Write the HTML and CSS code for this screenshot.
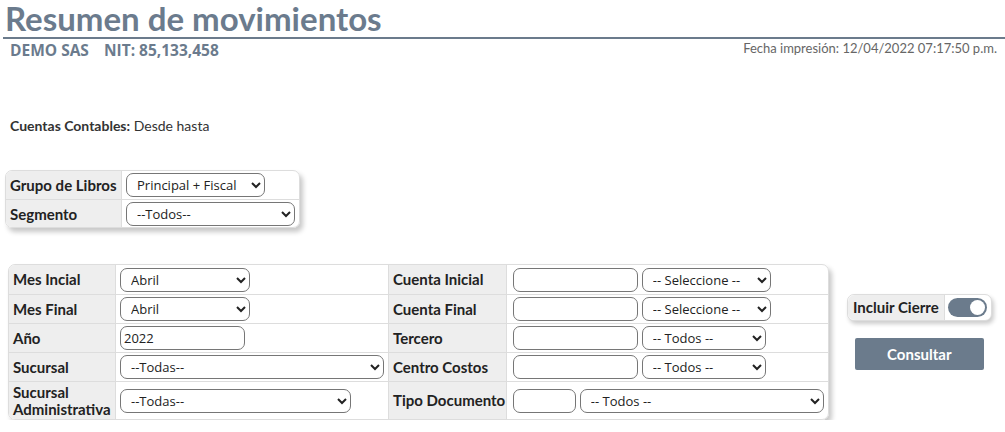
FILE: index.html
```html
<!DOCTYPE html>
<html lang="es">
<head>
  <meta charset="UTF-8">
  <meta name="viewport" content="width=device-width, initial-scale=1.0">
  <title>Resumen de movimientos</title>
  <link rel="stylesheet" href="styles.css">
</head>
<body>

  <!-- Encabezado -->
  <div class="encabezado">
    <h1>Resumen de movimientos</h1>
  </div>
  <div class="empresa">
    <span class="empresa-nombre">DEMO SAS <span class="nit">NIT: 85,133,458</span></span>
    <span class="fecha">Fecha impresión: 12/04/2022 07:17:50 p.m.</span>
  </div>

  <p class="cuentas"><b>Cuentas Contables:</b> Desde hasta</p>

  <!-- Libros -->
  <table class="tabla tabla-libros">
    <tr>
      <th>Grupo de Libros</th>
      <td>
        <select class="sel-libros">
          <option>Principal + Fiscal</option>
        </select>
      </td>
    </tr>
    <tr>
      <th>Segmento</th>
      <td>
        <select class="sel-segmento">
          <option>--Todos--</option>
        </select>
      </td>
    </tr>
  </table>

  <!-- Filtros -->
  <div class="filtros">
    <table class="tabla tabla-filtros">
      <tr>
        <th class="col1">Mes Incial</th>
        <td class="col2"><select class="sel-mes"><option>Abril</option></select></td>
        <th class="col3">Cuenta Inicial</th>
        <td class="col4">
          <input type="text" class="inp-cuenta">
          <select class="sel-cuenta"><option>-- Seleccione --</option></select>
        </td>
      </tr>
      <tr>
        <th>Mes Final</th>
        <td><select class="sel-mes"><option>Abril</option></select></td>
        <th>Cuenta Final</th>
        <td>
          <input type="text" class="inp-cuenta">
          <select class="sel-cuenta"><option>-- Seleccione --</option></select>
        </td>
      </tr>
      <tr>
        <th>Año</th>
        <td><input type="text" class="inp-anio" value="2022"></td>
        <th>Tercero</th>
        <td>
          <input type="text" class="inp-cuenta">
          <select class="sel-todos"><option>-- Todos --</option></select>
        </td>
      </tr>
      <tr>
        <th>Sucursal</th>
        <td><select class="sel-sucursal"><option>--Todas--</option></select></td>
        <th>Centro Costos</th>
        <td>
          <input type="text" class="inp-cuenta">
          <select class="sel-todos"><option>-- Todos --</option></select>
        </td>
      </tr>
      <tr class="fila-alta">
        <th>Sucursal Administrativa</th>
        <td><select class="sel-admin"><option>--Todas--</option></select></td>
        <th>Tipo Documento</th>
        <td>
          <input type="text" class="inp-tipo">
          <select class="sel-tipo"><option>-- Todos --</option></select>
        </td>
      </tr>
    </table>

    <div class="acciones">
      <div class="cierre">
        <span class="cierre-texto">Incluir Cierre</span>
        <span class="switch"><span class="switch-bola"></span></span>
      </div>
      <button class="btn-consultar">Consultar</button>
    </div>
  </div>

</body>
</html>
```

FILE: styles.css
```css
/* Estilos generales */
body {
  margin: 0;
  font-family: Lato, "Open Sans", sans-serif;
  color: #222;
  background: #fff;
}

/* Encabezado */
.encabezado {
  margin-left: 3px;
  padding-bottom: 1px;
  border-bottom: 2px solid #6b7b8c;
}

.encabezado h1 {
  margin: 0;
  padding-left: 2px;
  font-family: Lato, sans-serif;
  font-weight: 700;
  font-size: 33px;
  line-height: 36px;
  color: #6b7b8d;
}

.empresa {
  display: flex;
  justify-content: space-between;
  padding: 0 8px 0 10px;
}

.empresa-nombre {
  font-family: "Open Sans", sans-serif;
  font-weight: 700;
  font-size: 15.5px;
  color: #6b7b8d;
}

.nit {
  margin-left: 11px;
}

.fecha {
  font-size: 13px;
  color: #666;
  padding-top: 1px;
}

.cuentas {
  margin: 56px 0 0 10px;
  font-size: 14px;
  color: #333;
}

/* Tablas */
.tabla {
  border-collapse: separate;
  border-spacing: 0;
  border: 1px solid #ddd;
  border-radius: 7px;
  box-shadow: 3px 4px 5px rgba(0,0,0,0.22);
  font-size: 15px;
}

.tabla th {
  background: #eee;
  text-align: left;
  font-weight: 700;
  padding: 0 4px;
  border-right: 1px solid #ddd;
}

.tabla td {
  padding: 0 4px;
  white-space: nowrap;
}

.tabla tr + tr th,
.tabla tr + tr td {
  border-top: 1px solid #ddd;
}

.tabla tr:first-child th:first-child {
  border-top-left-radius: 6px;
}

.tabla tr:last-child th:first-child {
  border-bottom-left-radius: 6px;
}

.tabla-libros {
  margin: 36px 0 0 5px;
}

.tabla-libros tr {
  height: 28px;
}

.tabla-libros th {
  width: 107px;
}

select,
input[type="text"] {
  font-family: "Open Sans", sans-serif;
  font-size: 13px;
  height: 24px;
  border: 1px solid #767676;
  border-radius: 7px;
  background: #fff;
  color: #222;
  box-sizing: border-box;
  vertical-align: middle;
  padding: 0 6px;
}

input[type="text"] {
  padding: 0 3px;
}

.sel-libros { width: 139px; }
.sel-segmento { width: 169px; }

/* Filtros */
.filtros {
  display: flex;
  align-items: flex-start;
  margin-top: 36px;
}

.tabla-filtros {
  margin-left: 8px;
  width: 821px;
  table-layout: fixed;
}

.tabla-filtros tr {
  height: 29px;
}

.tabla-filtros .fila-alta {
  height: 38px;
}

.tabla-filtros .col1 { width: 98px; }
.tabla-filtros .col2 { width: 264px; }
.tabla-filtros .col3 { width: 109px; }
.tabla-filtros .col4 { width: auto; }

.tabla-filtros th {
  line-height: 17px;
}

.tabla-filtros td + th {
  border-left: 1px solid #ddd;
  white-space: nowrap;
}

.sel-mes { width: 130px; }
.inp-anio { width: 125px; }
.sel-sucursal { width: 264px; }
.sel-admin { width: 231px; }
.inp-cuenta { width: 125px; margin-left: 2px; }
.sel-cuenta { width: 129px; }
.sel-todos { width: 124px; }
.inp-tipo { width: 63px; margin-left: 2px; }
.sel-tipo { width: 244px; }

/* Acciones */
.acciones {
  display: flex;
  flex-direction: column;
  align-items: center;
  margin: 30px 0 0 18px;
}

.cierre {
  display: flex;
  align-items: center;
  border: 1px solid #ddd;
  border-radius: 7px;
  box-shadow: 2px 3px 4px rgba(0,0,0,0.2);
  height: 25px;
  background: #fff;
}

.cierre-texto {
  font-size: 15px;
  font-weight: 700;
  padding: 0 5px;
  background: #eee;
  height: 25px;
  line-height: 25px;
  border-right: 1px solid #ddd;
  border-radius: 7px 0 0 7px;
}

.switch {
  display: flex;
  justify-content: flex-end;
  align-items: center;
  width: 39px;
  height: 19px;
  margin: 0 4px 0 3px;
  border-radius: 10px;
  background: #6b7b8c;
}

.switch-bola {
  width: 15px;
  height: 15px;
  margin-right: 2px;
  border-radius: 50%;
  background: #fff;
}

.btn-consultar {
  margin-top: 17px;
  width: 129px;
  height: 32px;
  border: none;
  border-radius: 2px;
  background: #6b7b8c;
  color: #fff;
  font-family: Lato, sans-serif;
  font-weight: 700;
  font-size: 15px;
}
```
